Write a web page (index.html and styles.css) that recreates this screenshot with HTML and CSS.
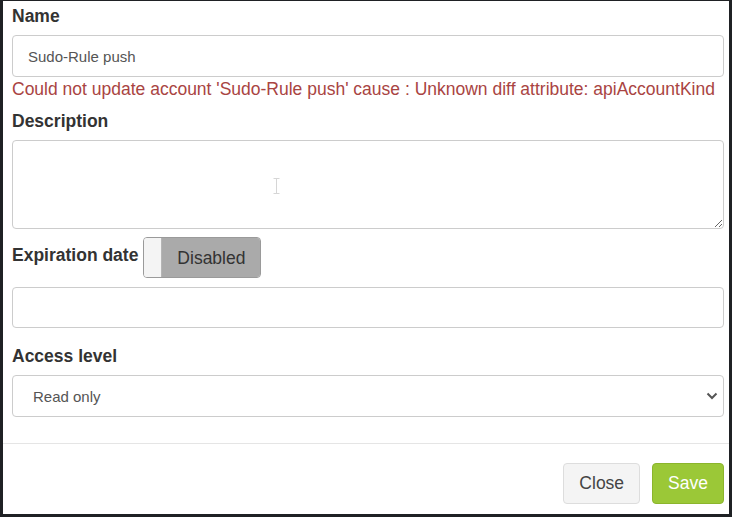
FILE: index.html
```html
<!DOCTYPE html>
<html lang="en">
<head>
  <meta charset="UTF-8" />
  <title>Edit account</title>
  <link rel="stylesheet" href="styles.css">
</head>
<body>
<div class="modal">

  <div class="modal-body">
    <!-- Name -->
    <label class="field-label" for="accName">Name</label>
    <input id="accName" class="form-control" type="text" value="Sudo-Rule push" />
    <div class="help-error">Could not update account 'Sudo-Rule push' cause : Unknown diff attribute: apiAccountKind</div>

    <!-- Description -->
    <label class="field-label" for="accDesc">Description</label>
    <div class="textarea-wrap">
      <textarea id="accDesc" class="form-control desc"></textarea>
      <svg class="ibeam" width="7" height="16" viewBox="0 0 7 16">
        <path d="M0.5 0.5h6M0.5 15.5h6M3.5 0.5v15" stroke="#d6d6d6" stroke-width="1" fill="none"/>
      </svg>
    </div>

    <!-- Expiration -->
    <div class="expire-row">
      <label class="field-label inline">Expiration date</label>
      <div class="toggle">
        <span class="toggle-handle"></span>
        <span class="toggle-off">Disabled</span>
      </div>
    </div>
    <input class="form-control short" type="text" />

    <!-- Access level -->
    <label class="field-label access" for="accLevel">Access level</label>
    <div class="select-wrap">
      <select id="accLevel" class="form-control">
        <option>Read only</option>
        <option>Read / write</option>
      </select>
      <svg class="chevron" width="12" height="8" viewBox="0 0 12 8">
        <polyline points="1.5,1.5 6,6 10.5,1.5" stroke="#555" stroke-width="2" fill="none"/>
      </svg>
    </div>
  </div>

  <div class="modal-footer">
    <button class="btn btn-default">Close</button>
    <button class="btn btn-save">Save</button>
  </div>

</div>
</body>
</html>
```

FILE: styles.css
```css
/* dark frame around the dialog */
html, body {
  margin: 0;
  padding: 0;
  height: 100%;
  background: #1f2124;
  font-family: "Liberation Sans", Arial, sans-serif;
  color: #333;
}

.modal {
  margin: 1px 3px 0 3px;
  height: 513px;
  background: #fff;
  display: flex;
  flex-direction: column;
}

.modal-body {
  display: flex;
  flex-direction: column;
  padding: 3px 5px 26px 9px;
}

/* labels */
.field-label {
  font-size: 17.5px;
  font-weight: bold;
  line-height: 25px;
  margin-bottom: 6px;
}
.field-label.inline {
  margin-bottom: 0;
  padding-bottom: 4px;
}
.field-label.access {
  margin-top: 16px;
}

/* inputs */
.form-control {
  display: block;
  width: 100%;
  height: 42px;
  box-sizing: border-box;
  border: 1px solid #ccc;
  border-radius: 4px;
  padding: 0 15px;
  font-family: "Liberation Sans", Arial, sans-serif;
  font-size: 15px;
  color: #555;
  background: #fff;
  outline: none;
  margin: 0;
}
.form-control.short {
  height: 41px;
}

.help-error {
  font-size: 17.5px;
  line-height: 25px;
  color: #a94442;
  margin-bottom: 7px;
  white-space: nowrap;
}

.textarea-wrap {
  position: relative;
  margin-bottom: 8px;
}
.desc {
  height: 89px;
  resize: vertical;
  padding: 8px 15px;
}
.ibeam {
  position: absolute;
  left: 261px;
  top: 38px;
}

/* expiration toggle */
.expire-row {
  display: flex;
  align-items: center;
  margin-bottom: 9px;
}
.toggle {
  display: flex;
  width: 118px;
  height: 41px;
  margin-left: 5px;
  box-sizing: border-box;
  border: 1px solid #9a9a9a;
  border-radius: 4px;
  overflow: hidden;
  box-shadow: inset 0 1px 2px rgba(0,0,0,0.15);
}
.toggle-handle {
  width: 17px;
  background: #f4f4f4;
  border-right: 1px solid #b5b5b5;
}
.toggle-off {
  flex: 1;
  display: flex;
  align-items: center;
  justify-content: center;
  padding-top: 2px;
  background: #aaaaaa;
  font-size: 17.5px;
  color: #333;
}

/* select */
.select-wrap {
  position: relative;
}
.select-wrap select {
  appearance: none;
  -webkit-appearance: none;
  padding-left: 20px;
}
.chevron {
  position: absolute;
  right: 6px;
  top: 17px;
  pointer-events: none;
}

/* footer */
.modal-footer {
  border-top: 1px solid #e5e5e5;
  padding: 19px 5px 0 0;
  display: flex;
  justify-content: flex-end;
  gap: 12px;
}
.btn {
  height: 41px;
  padding: 0 15px;
  border-radius: 4px;
  font-family: "Liberation Sans", Arial, sans-serif;
  font-size: 17.5px;
  cursor: pointer;
}
.btn-default {
  background: #f4f4f4;
  border: 1px solid #ddd;
  color: #444;
}
.btn-save {
  background: #9bc837;
  border: 1px solid #8bb52c;
  color: #fff;
}
```
